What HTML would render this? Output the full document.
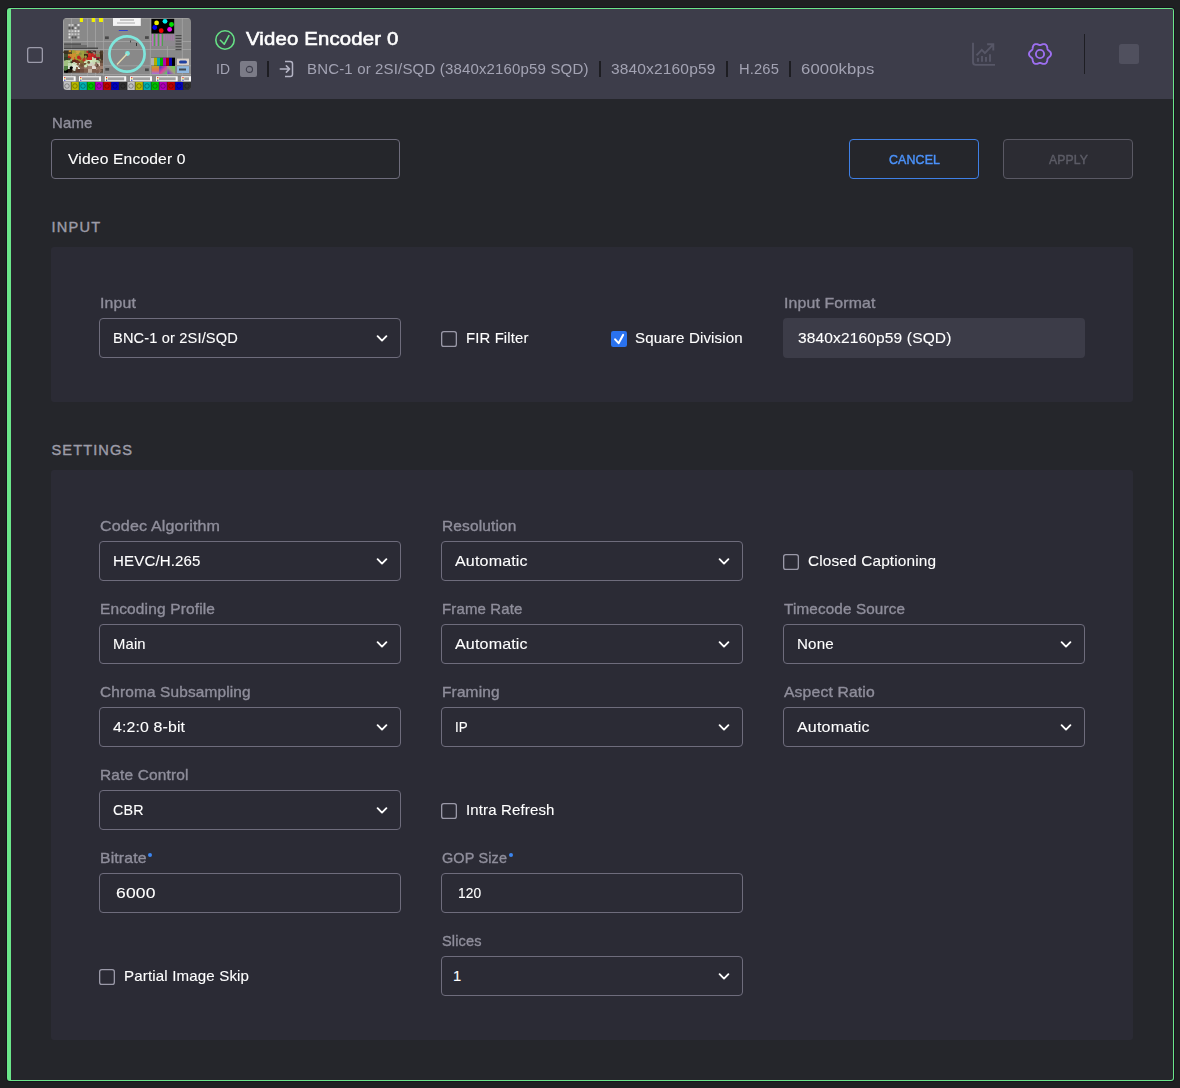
<!DOCTYPE html>
<html><head><meta charset="utf-8"><title>Video Encoder</title>
<style>
html,body{margin:0;padding:0;}
body{width:1180px;height:1088px;background:#1f2022;position:relative;overflow:hidden;font-family:"Liberation Sans",sans-serif;}
#card{position:absolute;left:7px;top:8px;width:1162px;height:1071px;border:1px solid #6be68a;border-left:4px solid #6be68a;border-radius:3px;background:#25262b;box-shadow:0 0 0 1px #17121c;}
#hdr{position:absolute;left:11px;top:9px;width:1162px;height:90px;background:#3d3d4a;border-top-right-radius:2px;}
.t{position:absolute;white-space:nowrap;}
.box{position:absolute;box-sizing:border-box;border:1px solid #6e6c7c;border-radius:4px;}
.panel{position:absolute;background:#2b2b35;border-radius:3px;}
.dot{position:absolute;width:4px;height:4px;border-radius:50%;background:#3b86f0;}
</style></head>
<body>
<div id="card"></div>
<div id="hdr"></div>
<svg width="16" height="16" style="position:absolute;left:27px;top:47px;"><rect x="0.65" y="0.65" width="14.7" height="14.7" rx="2.2" fill="none" stroke="#9c9baa" stroke-width="1.3"/></svg>
<svg width="128" height="72" viewBox="0 0 128 72" style="position:absolute;left:63px;top:18px;">
<defs><clipPath id="rc"><rect width="128" height="72" rx="4"/></clipPath>
<linearGradient id="g1" x1="0" y1="0" x2="0" y2="1"><stop offset="0" stop-color="#c8a020"/><stop offset="0.5" stop-color="#e07050"/><stop offset="1" stop-color="#a070e0"/></linearGradient>
<linearGradient id="g2" x1="0" y1="0" x2="1" y2="1"><stop offset="0" stop-color="#3030c0"/><stop offset="0.5" stop-color="#e040a0"/><stop offset="1" stop-color="#40e060"/></linearGradient>
<linearGradient id="g3" x1="0" y1="1" x2="1" y2="0"><stop offset="0" stop-color="#8020e0"/><stop offset="0.5" stop-color="#a0a080"/><stop offset="1" stop-color="#60e040"/></linearGradient>
</defs><g clip-path="url(#rc)">
<rect width="128" height="72" fill="#898989"/>
<g stroke="#a9a9a9" stroke-width="0.7">
<line x1="0.5" y1="0" x2="0.5" y2="58"/>
<line x1="8.4" y1="0" x2="8.4" y2="58"/>
<line x1="24.4" y1="0" x2="24.4" y2="58"/>
<line x1="32.5" y1="0" x2="32.5" y2="58"/>
<line x1="40.4" y1="0" x2="40.4" y2="58"/>
<line x1="87.3" y1="0" x2="87.3" y2="58"/>
<line x1="104.4" y1="0" x2="104.4" y2="58"/>
<line x1="119.3" y1="0" x2="119.3" y2="58"/>
<line x1="0" y1="0.6" x2="128" y2="0.6"/>
<line x1="0" y1="23.5" x2="128" y2="23.5"/>
<line x1="0" y1="31.5" x2="128" y2="31.5"/>
<line x1="0" y1="47.8" x2="128" y2="47.8"/>
<line x1="0" y1="56.5" x2="128" y2="56.5"/>
</g>
<rect x="16.8" y="0" width="3.1999999999999993" height="4" fill="#f0f000"/>
<rect x="28.7" y="0" width="3.3000000000000007" height="4" fill="#f0f000"/>
<rect x="36" y="0" width="4" height="4" fill="#f0f000"/>
<rect x="5.5" y="6.0" width="2" height="2" fill="#c8c8c8"/>
<rect x="8.5" y="6.0" width="2" height="2" fill="#c8c8c8"/>
<rect x="11.5" y="6.0" width="2" height="2" fill="#707070"/>
<rect x="14.5" y="6.0" width="2" height="2" fill="#e0e0e0"/>
<rect x="5.5" y="9.1" width="2" height="2" fill="#505050"/>
<rect x="8.5" y="9.1" width="2" height="2" fill="#505050"/>
<rect x="11.5" y="9.1" width="2" height="2" fill="#e0e0e0"/>
<rect x="14.5" y="9.1" width="2" height="2" fill="#707070"/>
<rect x="5.5" y="12.2" width="2" height="2" fill="#c8c8c8"/>
<rect x="8.5" y="12.2" width="2" height="2" fill="#c8c8c8"/>
<rect x="11.5" y="12.2" width="2" height="2" fill="#e0e0e0"/>
<rect x="14.5" y="12.2" width="2" height="2" fill="#e0e0e0"/>
<rect x="5.5" y="15.3" width="2" height="2" fill="#e0e0e0"/>
<rect x="8.5" y="15.3" width="2" height="2" fill="#c8c8c8"/>
<rect x="11.5" y="15.3" width="2" height="2" fill="#c8c8c8"/>
<rect x="14.5" y="15.3" width="2" height="2" fill="#c8c8c8"/>
<rect x="5.5" y="18.4" width="2" height="2" fill="#e0e0e0"/>
<rect x="8.5" y="18.4" width="2" height="2" fill="#505050"/>
<rect x="11.5" y="18.4" width="2" height="2" fill="#505050"/>
<rect x="14.5" y="18.4" width="2" height="2" fill="#c8c8c8"/>
<rect x="1" y="25.5" width="17" height="1.2" fill="#404040"/><rect x="1" y="27.5" width="23" height="1" fill="#555"/><rect x="1" y="29.6" width="34" height="1.2" fill="#3a3a3a"/>
<rect x="42" y="18.4" width="3.8" height="2.7" fill="#3a3a3a" opacity="0.8"/>
<rect x="82" y="18.2" width="3.8" height="2.7" fill="#3a3a3a" opacity="0.8"/>
<rect x="42.3" y="50" width="3.8" height="2.7" fill="#3a3a3a" opacity="0.8"/>
<rect x="82" y="50.4" width="3.8" height="2.7" fill="#3a3a3a" opacity="0.8"/>
<rect x="50" y="0" width="27.8" height="7.9" fill="#f4f4f4"/><rect x="57" y="1.5" width="14" height="1" fill="#999"/><rect x="54" y="4.5" width="18" height="1" fill="#aaa"/>
<rect x="55.8" y="12" width="9" height="1" fill="#3040d0"/>
<rect x="88.4" y="0.8" width="22.8" height="14.7" fill="#000"/>
<circle cx="93.6" cy="4.9" r="2.4" fill="#f0f000"/>
<circle cx="102" cy="3.3" r="2.4" fill="#00f0f0"/>
<circle cx="108.5" cy="6.5" r="2.4" fill="#00e000"/>
<circle cx="91.7" cy="9.5" r="2.4" fill="#0000f0"/>
<circle cx="98.2" cy="12.7" r="2.4" fill="#f00000"/>
<circle cx="106.6" cy="11.4" r="2.4" fill="#f000f0"/>
<rect x="88.7" y="16" width="23.3" height="12" fill="#8e8a90"/>
<rect x="89" y="16" width="1" height="12" fill="#c070c0"/>
<rect x="91" y="16" width="1" height="12" fill="#50a050"/>
<rect x="93" y="16" width="1" height="12" fill="#c070c0"/>
<rect x="95" y="16" width="1" height="12" fill="#50a050"/>
<rect x="97" y="16" width="1" height="12" fill="#c070c0"/>
<rect x="99" y="16" width="1" height="12" fill="#50a050"/>
<rect x="101.0" y="16.5" width="1.2" height="6" fill="#b070b0" opacity="0.8"/>
<rect x="103.2" y="16.5" width="1.2" height="6" fill="#b070b0" opacity="0.8"/>
<rect x="105.4" y="16.5" width="1.2" height="6" fill="#b070b0" opacity="0.8"/>
<rect x="107.6" y="16.5" width="1.2" height="6" fill="#b070b0" opacity="0.8"/>
<rect x="109.8" y="16.5" width="1.2" height="6" fill="#b070b0" opacity="0.8"/>
<rect x="112.5" y="17.0" width="6" height="1.2" fill="#3a3a3a" opacity="0.8"/>
<rect x="112.5" y="19.8" width="6" height="1.2" fill="#3a3a3a" opacity="0.8"/>
<rect x="112.5" y="22.6" width="6" height="1.2" fill="#3a3a3a" opacity="0.8"/>
<rect x="112.5" y="25.4" width="6" height="1.2" fill="#3a3a3a" opacity="0.8"/>
<rect x="112.5" y="28.2" width="6" height="1.2" fill="#3a3a3a" opacity="0.8"/>
<rect x="112.5" y="31.0" width="6" height="1.2" fill="#3a3a3a" opacity="0.8"/>
<filter id="bl" x="0" y="0" width="1" height="1"><feGaussianBlur stdDeviation="0.45"/></filter>
<g filter="url(#bl)">
<rect x="1" y="32.5" width="4.05" height="3.55" fill="#3a3020"/>
<rect x="5" y="32.5" width="4.05" height="3.55" fill="#504020"/>
<rect x="9" y="32.5" width="4.05" height="3.55" fill="#c89030"/>
<rect x="13" y="32.5" width="4.05" height="3.55" fill="#d0a040"/>
<rect x="17" y="32.5" width="4.05" height="3.55" fill="#a0a040"/>
<rect x="21" y="32.5" width="4.05" height="3.55" fill="#8a8a40"/>
<rect x="25" y="32.5" width="4.05" height="3.55" fill="#403828"/>
<rect x="29" y="32.5" width="4.05" height="3.55" fill="#503030"/>
<rect x="33" y="32.5" width="4.05" height="3.55" fill="#908070"/>
<rect x="37" y="32.5" width="3.05" height="3.55" fill="#504030"/>
<rect x="1" y="36" width="4.05" height="3.05" fill="#405030"/>
<rect x="5" y="36" width="4.05" height="3.05" fill="#c08030"/>
<rect x="9" y="36" width="4.05" height="3.05" fill="#d09030"/>
<rect x="13" y="36" width="4.05" height="3.05" fill="#a0a030"/>
<rect x="17" y="36" width="4.05" height="3.05" fill="#a0a040"/>
<rect x="21" y="36" width="4.05" height="3.05" fill="#402818"/>
<rect x="25" y="36" width="4.05" height="3.05" fill="#c02020"/>
<rect x="29" y="36" width="4.05" height="3.05" fill="#d03020"/>
<rect x="33" y="36" width="4.05" height="3.05" fill="#808050"/>
<rect x="37" y="36" width="3.05" height="3.05" fill="#403020"/>
<rect x="1" y="39" width="4.05" height="3.05" fill="#304028"/>
<rect x="5" y="39" width="4.05" height="3.05" fill="#b02020"/>
<rect x="9" y="39" width="4.05" height="3.05" fill="#c02020"/>
<rect x="13" y="39" width="4.05" height="3.05" fill="#a09030"/>
<rect x="17" y="39" width="4.05" height="3.05" fill="#a09040"/>
<rect x="21" y="39" width="4.05" height="3.05" fill="#c03020"/>
<rect x="25" y="39" width="4.05" height="3.05" fill="#d02020"/>
<rect x="29" y="39" width="4.05" height="3.05" fill="#c8d8b0"/>
<rect x="33" y="39" width="4.05" height="3.05" fill="#a02030"/>
<rect x="37" y="39" width="3.05" height="3.05" fill="#403028"/>
<rect x="1" y="42" width="4.05" height="3.05" fill="#a0c080"/>
<rect x="5" y="42" width="4.05" height="3.05" fill="#90b070"/>
<rect x="9" y="42" width="4.05" height="3.05" fill="#602818"/>
<rect x="13" y="42" width="4.05" height="3.05" fill="#703020"/>
<rect x="17" y="42" width="4.05" height="3.05" fill="#807030"/>
<rect x="21" y="42" width="4.05" height="3.05" fill="#c8e0b0"/>
<rect x="25" y="42" width="4.05" height="3.05" fill="#d0e8c0"/>
<rect x="29" y="42" width="4.05" height="3.05" fill="#c8e0b0"/>
<rect x="33" y="42" width="4.05" height="3.05" fill="#b0c8a0"/>
<rect x="37" y="42" width="3.05" height="3.05" fill="#604838"/>
<rect x="1" y="45" width="4.05" height="3.05" fill="#a0c080"/>
<rect x="5" y="45" width="4.05" height="3.05" fill="#c0d8b0"/>
<rect x="9" y="45" width="4.05" height="3.05" fill="#d0e0c0"/>
<rect x="13" y="45" width="4.05" height="3.05" fill="#e0e8d0"/>
<rect x="17" y="45" width="4.05" height="3.05" fill="#806040"/>
<rect x="21" y="45" width="4.05" height="3.05" fill="#705030"/>
<rect x="25" y="45" width="4.05" height="3.05" fill="#d0d0c0"/>
<rect x="29" y="45" width="4.05" height="3.05" fill="#d8c8b8"/>
<rect x="33" y="45" width="4.05" height="3.05" fill="#e0d0c0"/>
<rect x="37" y="45" width="3.05" height="3.05" fill="#806050"/>
<rect x="1" y="48" width="4.05" height="3.05" fill="#508040"/>
<rect x="5" y="48" width="4.05" height="3.05" fill="#d8e0d0"/>
<rect x="9" y="48" width="4.05" height="3.05" fill="#e0e8d8"/>
<rect x="13" y="48" width="4.05" height="3.05" fill="#e8f0e0"/>
<rect x="17" y="48" width="4.05" height="3.05" fill="#806050"/>
<rect x="21" y="48" width="4.05" height="3.05" fill="#907060"/>
<rect x="25" y="48" width="4.05" height="3.05" fill="#a08070"/>
<rect x="29" y="48" width="4.05" height="3.05" fill="#e0d8d0"/>
<rect x="33" y="48" width="4.05" height="3.05" fill="#907060"/>
<rect x="37" y="48" width="3.05" height="3.05" fill="#a08070"/>
<rect x="1" y="51" width="4.05" height="3.7500000000000027" fill="#000000"/>
<rect x="5" y="51" width="4.05" height="3.7500000000000027" fill="#201810"/>
<rect x="9" y="51" width="4.05" height="3.7500000000000027" fill="#504030"/>
<rect x="13" y="51" width="4.05" height="3.7500000000000027" fill="#604030"/>
<rect x="17" y="51" width="4.05" height="3.7500000000000027" fill="#705040"/>
<rect x="21" y="51" width="4.05" height="3.7500000000000027" fill="#806050"/>
<rect x="25" y="51" width="4.05" height="3.7500000000000027" fill="#c0b0a0"/>
<rect x="29" y="51" width="4.05" height="3.7500000000000027" fill="#806050"/>
<rect x="33" y="51" width="4.05" height="3.7500000000000027" fill="#a08070"/>
<rect x="37" y="51" width="3.05" height="3.7500000000000027" fill="#605040"/>
<circle cx="29.8" cy="45.4" r="1.6" fill="#d0d0c0"/>
<circle cx="11.2" cy="45.5" r="1.6" fill="#e0e8d0"/>
<circle cx="17.2" cy="48.3" r="1.8" fill="#806050"/>
<circle cx="6.1" cy="40.7" r="1.3" fill="#405030"/>
<circle cx="10.8" cy="47.1" r="1.2" fill="#e0e8d8"/>
<circle cx="32.7" cy="45.1" r="1.2" fill="#806050"/>
<circle cx="9.8" cy="40.1" r="1.8" fill="#d09030"/>
<circle cx="26.5" cy="36.4" r="1.7" fill="#d03020"/>
<circle cx="22.6" cy="48.0" r="1.6" fill="#d0e8c0"/>
<circle cx="22.8" cy="39.0" r="1.7" fill="#402818"/>
<circle cx="38.6" cy="34.9" r="1.7" fill="#504030"/>
<circle cx="1.8" cy="42.0" r="0.8" fill="#304028"/>
<circle cx="24.4" cy="33.9" r="1.1" fill="#c02020"/>
<circle cx="34.5" cy="53.6" r="1.8" fill="#806050"/>
<circle cx="12.8" cy="34.6" r="0.8" fill="#a0a040"/>
<circle cx="8.5" cy="41.6" r="1.0" fill="#90b070"/>
<circle cx="2.6" cy="51.2" r="1.8" fill="#508040"/>
<circle cx="35.1" cy="40.9" r="1.2" fill="#403028"/>
<circle cx="33.9" cy="47.3" r="1.8" fill="#604838"/>
<circle cx="31.8" cy="38.7" r="1.5" fill="#a02030"/>
<circle cx="36.6" cy="42.2" r="1.1" fill="#604838"/>
<circle cx="13.9" cy="49.6" r="0.8" fill="#604030"/>
<circle cx="24.4" cy="46.3" r="1.4" fill="#c8e0b0"/>
<circle cx="18.7" cy="47.3" r="1.5" fill="#705030"/>
<circle cx="29.0" cy="33.5" r="0.8" fill="#908070"/>
<circle cx="15.0" cy="46.2" r="1.4" fill="#806040"/>
<circle cx="7.7" cy="36.9" r="1.1" fill="#d09030"/>
<circle cx="30.9" cy="35.2" r="1.5" fill="#908070"/>
<circle cx="6.0" cy="43.5" r="1.0" fill="#c0d8b0"/>
<circle cx="8.1" cy="42.1" r="0.9" fill="#a0c080"/>
<circle cx="13.2" cy="40.0" r="1.6" fill="#a0a030"/>
<circle cx="37.5" cy="34.7" r="1.0" fill="#403020"/>
<circle cx="22.6" cy="38.7" r="1.3" fill="#a0a040"/>
<circle cx="8.3" cy="49.9" r="1.7" fill="#000000"/>
<circle cx="13.9" cy="50.4" r="1.1" fill="#806040"/>
<circle cx="5.9" cy="39.1" r="1.1" fill="#b02020"/>
<circle cx="16.8" cy="41.8" r="1.7" fill="#a09030"/>
<circle cx="6.9" cy="33.1" r="1.2" fill="#d09030"/>
<circle cx="37.1" cy="52.5" r="1.5" fill="#907060"/>
<circle cx="32.8" cy="46.9" r="1.3" fill="#907060"/>
<circle cx="34.8" cy="51.1" r="0.9" fill="#a08070"/>
<circle cx="10.3" cy="33.7" r="1.7" fill="#a0a030"/>
<circle cx="35.1" cy="51.9" r="0.8" fill="#806050"/>
<circle cx="29.3" cy="36.6" r="1.5" fill="#c02020"/>
<circle cx="20.9" cy="41.7" r="1.1" fill="#807030"/>
<circle cx="10.6" cy="51.1" r="1.2" fill="#d8e0d0"/>
<circle cx="8.5" cy="44.2" r="1.0" fill="#304028"/>
<circle cx="11.4" cy="51.7" r="1.3" fill="#d8e0d0"/>
<circle cx="22.7" cy="41.4" r="1.1" fill="#a09040"/>
<circle cx="21.0" cy="41.9" r="1.6" fill="#c03020"/>
<circle cx="1.1" cy="34.2" r="0.9" fill="#3a3020"/>
<circle cx="3.6" cy="53.5" r="1.3" fill="#000000"/>
<circle cx="19.6" cy="36.3" r="1.2" fill="#a0a040"/>
<circle cx="15.8" cy="39.4" r="1.8" fill="#c02020"/>
<circle cx="17.3" cy="35.7" r="1.5" fill="#8a8a40"/>
<circle cx="31.2" cy="44.9" r="1.3" fill="#c8d8b0"/>
<circle cx="25.7" cy="44.4" r="1.4" fill="#705030"/>
<circle cx="17.4" cy="40.8" r="1.1" fill="#c03020"/>
<circle cx="37.1" cy="41.8" r="1.0" fill="#808050"/>
<circle cx="11.3" cy="45.4" r="1.2" fill="#c0d8b0"/>
</g>
<circle cx="64" cy="36" r="17.6" fill="none" stroke="#7fe6dc" stroke-width="2.7"/>
<circle cx="64.5" cy="35.5" r="2.4" fill="#7fe6dc"/>
<line x1="64" y1="36" x2="54" y2="46.5" stroke="#e8dcb0" stroke-width="1.3"/>
<rect x="67" y="22.5" width="0.8" height="2" fill="#333"/><rect x="73" y="25" width="1" height="3" fill="#333"/>
<rect x="88" y="39.8" width="24" height="7.9" fill="#000"/>
<rect x="88" y="39.8" width="3" height="7.9" fill="#b0b0b0"/>
<rect x="91" y="39.8" width="3" height="7.9" fill="#b0b000"/>
<rect x="94" y="39.8" width="3" height="7.9" fill="#00b0b0"/>
<rect x="97" y="39.8" width="3" height="7.9" fill="#00b000"/>
<rect x="100" y="39.8" width="3" height="7.9" fill="#b000b0"/>
<rect x="103" y="39.8" width="3" height="7.9" fill="#b00000"/>
<rect x="106" y="39.8" width="3" height="7.9" fill="#0000b0"/>
<rect x="109" y="39.8" width="3" height="7.9" fill="#000000"/>
<rect x="88.7" y="48.2" width="7.3" height="7.8" fill="url(#g1)"/><rect x="96.3" y="48.2" width="7.8" height="7.8" fill="url(#g2)"/><rect x="104.4" y="48.2" width="7.6" height="7.8" fill="url(#g3)"/>
<rect x="114" y="40.6" width="12" height="6.5" fill="#d8d0c8"/><rect x="116" y="42.5" width="8" height="3" rx="1.5" fill="#2040a0"/>
<rect x="114" y="48.2" width="12" height="6.8" fill="#90b8e0"/><rect x="116" y="50.5" width="7" height="2" fill="#404850"/>
<rect x="0" y="57.8" width="128" height="6.2" fill="#8a8a8a"/>
<rect x="0" y="58.2" width="12.7" height="5.2" fill="#f8f8f8"/>
<rect x="1.2" y="59" width="1.2" height="1.2" fill="#e02020"/><rect x="1.2" y="60.3" width="1.2" height="1.2" fill="#e0e020"/><rect x="1.2" y="61.6" width="1.2" height="1.2" fill="#2020c0"/>
<rect x="3" y="59.3" width="7.699999999999999" height="3" fill="#555" opacity="0.55"/>
<rect x="16" y="58.2" width="22" height="5.2" fill="#f8f8f8"/>
<rect x="17.2" y="59" width="1.2" height="1.2" fill="#e02020"/><rect x="17.2" y="60.3" width="1.2" height="1.2" fill="#e0e020"/><rect x="17.2" y="61.6" width="1.2" height="1.2" fill="#2020c0"/>
<rect x="19" y="59.3" width="17" height="3" fill="#555" opacity="0.55"/>
<rect x="41.8" y="58.2" width="21.400000000000006" height="5.2" fill="#f8f8f8"/>
<rect x="43.0" y="59" width="1.2" height="1.2" fill="#e02020"/><rect x="43.0" y="60.3" width="1.2" height="1.2" fill="#e0e020"/><rect x="43.0" y="61.6" width="1.2" height="1.2" fill="#2020c0"/>
<rect x="44.8" y="59.3" width="16.400000000000006" height="3" fill="#555" opacity="0.55"/>
<rect x="67" y="58.2" width="22" height="5.2" fill="#f8f8f8"/>
<rect x="68.2" y="59" width="1.2" height="1.2" fill="#e02020"/><rect x="68.2" y="60.3" width="1.2" height="1.2" fill="#e0e020"/><rect x="68.2" y="61.6" width="1.2" height="1.2" fill="#2020c0"/>
<rect x="70" y="59.3" width="17" height="3" fill="#555" opacity="0.55"/>
<rect x="93" y="58.2" width="21.700000000000003" height="5.2" fill="#f8f8f8"/>
<rect x="94.2" y="59" width="1.2" height="1.2" fill="#e02020"/><rect x="94.2" y="60.3" width="1.2" height="1.2" fill="#e0e020"/><rect x="94.2" y="61.6" width="1.2" height="1.2" fill="#2020c0"/>
<rect x="96" y="59.3" width="16.700000000000003" height="3" fill="#555" opacity="0.55"/>
<rect x="118.2" y="58.2" width="9.799999999999997" height="5.2" fill="#f8f8f8"/>
<rect x="119.4" y="59" width="1.2" height="1.2" fill="#e02020"/><rect x="119.4" y="60.3" width="1.2" height="1.2" fill="#e0e020"/><rect x="119.4" y="61.6" width="1.2" height="1.2" fill="#2020c0"/>
<rect x="121.2" y="59.3" width="4.799999999999997" height="3" fill="#555" opacity="0.55"/>
<rect x="0" y="63.9" width="128" height="8.1" fill="#222"/>
<rect x="0.4" y="64" width="7.4" height="8" fill="#c0c0c0"/>
<circle cx="4" cy="68" r="2.3" fill="none" stroke="#000" stroke-width="0.6" opacity="0.5"/>
<rect x="8.4" y="64" width="7.4" height="8" fill="#b8b800"/>
<circle cx="12" cy="68" r="2.3" fill="none" stroke="#000" stroke-width="0.6" opacity="0.5"/>
<rect x="16.4" y="64" width="7.4" height="8" fill="#00b0b0"/>
<circle cx="20" cy="68" r="2.3" fill="none" stroke="#000" stroke-width="0.6" opacity="0.5"/>
<rect x="24.4" y="64" width="7.4" height="8" fill="#00c000"/>
<circle cx="28" cy="68" r="2.3" fill="none" stroke="#000" stroke-width="0.6" opacity="0.5"/>
<rect x="32.4" y="64" width="7.4" height="8" fill="#b000b8"/>
<circle cx="36" cy="68" r="2.3" fill="none" stroke="#000" stroke-width="0.6" opacity="0.5"/>
<rect x="40.4" y="64" width="7.4" height="8" fill="#c00000"/>
<circle cx="44" cy="68" r="2.3" fill="none" stroke="#000" stroke-width="0.6" opacity="0.5"/>
<rect x="48.4" y="64" width="7.4" height="8" fill="#0000c0"/>
<circle cx="52" cy="68" r="2.3" fill="none" stroke="#000" stroke-width="0.6" opacity="0.5"/>
<rect x="56.4" y="64" width="7.4" height="8" fill="#303030"/>
<circle cx="60" cy="68" r="2.3" fill="none" stroke="#000" stroke-width="0.6" opacity="0.5"/>
<rect x="64.4" y="64" width="7.4" height="8" fill="#c0c0c0"/>
<circle cx="68" cy="68" r="2.3" fill="none" stroke="#000" stroke-width="0.6" opacity="0.5"/>
<rect x="72.4" y="64" width="7.4" height="8" fill="#b8b800"/>
<circle cx="76" cy="68" r="2.3" fill="none" stroke="#000" stroke-width="0.6" opacity="0.5"/>
<rect x="80.4" y="64" width="7.4" height="8" fill="#00b0b0"/>
<circle cx="84" cy="68" r="2.3" fill="none" stroke="#000" stroke-width="0.6" opacity="0.5"/>
<rect x="88.4" y="64" width="7.4" height="8" fill="#00c000"/>
<circle cx="92" cy="68" r="2.3" fill="none" stroke="#000" stroke-width="0.6" opacity="0.5"/>
<rect x="96.4" y="64" width="7.4" height="8" fill="#b000b8"/>
<circle cx="100" cy="68" r="2.3" fill="none" stroke="#000" stroke-width="0.6" opacity="0.5"/>
<rect x="104.4" y="64" width="7.4" height="8" fill="#c00000"/>
<circle cx="108" cy="68" r="2.3" fill="none" stroke="#000" stroke-width="0.6" opacity="0.5"/>
<rect x="112.4" y="64" width="7.4" height="8" fill="#0000c0"/>
<circle cx="116" cy="68" r="2.3" fill="none" stroke="#000" stroke-width="0.6" opacity="0.5"/>
<rect x="120.4" y="64" width="7.4" height="8" fill="#303030"/>
<circle cx="124" cy="68" r="2.3" fill="none" stroke="#000" stroke-width="0.6" opacity="0.5"/>
</g></svg>
<svg width="24" height="24" viewBox="0 0 24 24" style="position:absolute;left:213px;top:28px;">
<circle cx="12" cy="12" r="9.2" fill="none" stroke="#66e085" stroke-width="1.6"/>
<path d="M7.4 12.3 L11.3 16.2 L15.9 7.6" fill="none" stroke="#66e085" stroke-width="1.6" stroke-linecap="round" stroke-linejoin="round"/>
</svg>
<div class="t" style="left:245.70px;top:28.72px;font-size:19px;line-height:19px;color:#ffffff;font-weight:400;letter-spacing:0.140px;transform:scaleX(1.0712);transform-origin:0 0;-webkit-text-stroke:0.6px #ffffff;">Video Encoder 0</div>
<div class="t" style="left:215.70px;top:61.73px;font-size:14.5px;line-height:14.5px;color:#a3a3b3;font-weight:400;letter-spacing:0.157px;transform:scaleX(0.9552);transform-origin:0 0;">ID</div>
<div style="position:absolute;left:240px;top:61px;width:17px;height:16px;border-radius:2px;background:#7b7b87;"></div>
<svg width="17" height="16" style="position:absolute;left:240px;top:61px;"><ellipse cx="9.4" cy="8.4" rx="3.1" ry="3.0" fill="none" stroke="#3e3e4c" stroke-width="1.1"/></svg>
<div style="position:absolute;left:267px;top:61px;width:2px;height:16px;background:#1d1d22;"></div>
<div style="position:absolute;left:598.5px;top:61px;width:2px;height:16px;background:#1d1d22;"></div>
<div style="position:absolute;left:726px;top:61px;width:2px;height:16px;background:#1d1d22;"></div>
<div style="position:absolute;left:789px;top:61px;width:2px;height:16px;background:#1d1d22;"></div>
<svg width="18" height="18" viewBox="0 0 18 18" style="position:absolute;left:278px;top:60px;">
<path d="M7 1.5 H12.2 Q14.5 1.5 14.5 3.8 V14.2 Q14.5 16.5 12.2 16.5 H7" fill="none" stroke="#b4b4c4" stroke-width="1.5"/>
<path d="M2.3 9 H11.6 M8.4 5.9 L11.6 9 L8.4 12.1" fill="none" stroke="#b4b4c4" stroke-width="1.6" stroke-linejoin="round" stroke-linecap="round"/>
</svg>
<div class="t" style="left:306.50px;top:61.57px;font-size:14.8px;line-height:14.8px;color:#a3a3b3;font-weight:400;letter-spacing:0.148px;transform:scaleX(1.0150);transform-origin:0 0;">BNC-1 or 2SI/SQD (3840x2160p59 SQD)</div>
<div class="t" style="left:611.20px;top:61.57px;font-size:14.8px;line-height:14.8px;color:#a3a3b3;font-weight:400;letter-spacing:0.143px;transform:scaleX(1.0487);transform-origin:0 0;">3840x2160p59</div>
<div class="t" style="left:738.60px;top:61.57px;font-size:14.8px;line-height:14.8px;color:#a3a3b3;font-weight:400;letter-spacing:0.151px;transform:scaleX(0.9945);transform-origin:0 0;">H.265</div>
<div class="t" style="left:801.00px;top:61.57px;font-size:14.8px;line-height:14.8px;color:#a3a3b3;font-weight:400;letter-spacing:0.133px;transform:scaleX(1.1246);transform-origin:0 0;">6000kbps</div>
<svg width="28" height="28" viewBox="0 0 28 28" style="position:absolute;left:970px;top:41px;">
<path d="M3 1.8 V21 Q3 23.9 5.9 23.9 H25" fill="none" stroke="#575767" stroke-width="1.9"/>
<path d="M6.5 14.4 L11.8 8.9 L14.9 12.2 L22.8 3.8 M17.1 3.3 H23.3 V9.6" fill="none" stroke="#575767" stroke-width="1.9"/>
<path d="M8 17 V20.8 M12 15.1 V20.8 M16 16 V20.8 M20 13.2 V20.8" fill="none" stroke="#575767" stroke-width="1.9"/>
</svg>
<svg width="28" height="28" viewBox="0 0 28 28" style="position:absolute;left:1026px;top:40px;">
<path fill="none" stroke="#9d6ff0" stroke-width="1.9" stroke-linejoin="round" d="M25.00 14.00 L24.99 14.19 L24.97 14.38 L24.94 14.57 L24.90 14.76 L24.84 14.95 L24.77 15.13 L24.69 15.31 L24.60 15.49 L24.50 15.66 L24.38 15.83 L24.27 16.00 L24.14 16.15 L24.00 16.31 L23.87 16.46 L23.72 16.61 L23.57 16.75 L23.43 16.88 L23.27 17.01 L23.12 17.14 L22.97 17.27 L22.82 17.39 L22.67 17.50 L22.53 17.62 L22.39 17.74 L22.26 17.85 L22.13 17.97 L22.01 18.08 L21.90 18.20 L21.80 18.32 L21.71 18.45 L21.64 18.59 L21.59 18.74 L21.54 18.90 L21.50 19.06 L21.46 19.23 L21.43 19.40 L21.40 19.58 L21.37 19.76 L21.34 19.95 L21.31 20.14 L21.28 20.33 L21.25 20.52 L21.21 20.72 L21.17 20.92 L21.12 21.12 L21.06 21.31 L21.00 21.51 L20.94 21.70 L20.86 21.89 L20.78 22.08 L20.69 22.26 L20.59 22.43 L20.48 22.60 L20.36 22.76 L20.24 22.91 L20.11 23.06 L19.97 23.19 L19.82 23.31 L19.66 23.42 L19.50 23.53 L19.33 23.62 L19.16 23.70 L18.97 23.76 L18.79 23.82 L18.60 23.86 L18.40 23.89 L18.21 23.91 L18.01 23.92 L17.81 23.92 L17.61 23.91 L17.40 23.89 L17.20 23.86 L17.00 23.82 L16.80 23.77 L16.61 23.72 L16.41 23.66 L16.22 23.60 L16.03 23.54 L15.84 23.47 L15.66 23.40 L15.48 23.33 L15.30 23.26 L15.13 23.20 L14.96 23.13 L14.79 23.08 L14.63 23.02 L14.47 22.98 L14.31 22.94 L14.16 22.91 L14.00 22.90 L13.84 22.91 L13.69 22.94 L13.53 22.98 L13.37 23.02 L13.21 23.08 L13.04 23.13 L12.87 23.20 L12.70 23.26 L12.52 23.33 L12.34 23.40 L12.16 23.47 L11.97 23.54 L11.78 23.60 L11.59 23.66 L11.39 23.72 L11.20 23.77 L11.00 23.82 L10.80 23.86 L10.60 23.89 L10.39 23.91 L10.19 23.92 L9.99 23.92 L9.79 23.91 L9.60 23.89 L9.40 23.86 L9.21 23.82 L9.03 23.76 L8.84 23.70 L8.67 23.62 L8.50 23.53 L8.34 23.42 L8.18 23.31 L8.03 23.19 L7.89 23.06 L7.76 22.91 L7.64 22.76 L7.52 22.60 L7.41 22.43 L7.31 22.26 L7.22 22.08 L7.14 21.89 L7.06 21.70 L7.00 21.51 L6.94 21.31 L6.88 21.12 L6.83 20.92 L6.79 20.72 L6.75 20.52 L6.72 20.33 L6.69 20.14 L6.66 19.95 L6.63 19.76 L6.60 19.58 L6.57 19.40 L6.54 19.23 L6.50 19.06 L6.46 18.90 L6.41 18.74 L6.36 18.59 L6.29 18.45 L6.20 18.32 L6.10 18.20 L5.99 18.08 L5.87 17.97 L5.74 17.85 L5.61 17.74 L5.47 17.62 L5.33 17.50 L5.18 17.39 L5.03 17.27 L4.88 17.14 L4.73 17.01 L4.57 16.88 L4.43 16.75 L4.28 16.61 L4.13 16.46 L4.00 16.31 L3.86 16.15 L3.73 16.00 L3.62 15.83 L3.50 15.66 L3.40 15.49 L3.31 15.31 L3.23 15.13 L3.16 14.95 L3.10 14.76 L3.06 14.57 L3.03 14.38 L3.01 14.19 L3.00 14.00 L3.01 13.81 L3.03 13.62 L3.06 13.43 L3.10 13.24 L3.16 13.05 L3.23 12.87 L3.31 12.69 L3.40 12.51 L3.50 12.34 L3.62 12.17 L3.73 12.00 L3.86 11.85 L4.00 11.69 L4.13 11.54 L4.28 11.39 L4.43 11.25 L4.57 11.12 L4.73 10.99 L4.88 10.86 L5.03 10.73 L5.18 10.61 L5.33 10.50 L5.47 10.38 L5.61 10.26 L5.74 10.15 L5.87 10.03 L5.99 9.92 L6.10 9.80 L6.20 9.68 L6.29 9.55 L6.36 9.41 L6.41 9.26 L6.46 9.10 L6.50 8.94 L6.54 8.77 L6.57 8.60 L6.60 8.42 L6.63 8.24 L6.66 8.05 L6.69 7.86 L6.72 7.67 L6.75 7.48 L6.79 7.28 L6.83 7.08 L6.88 6.88 L6.94 6.69 L7.00 6.49 L7.06 6.30 L7.14 6.11 L7.22 5.92 L7.31 5.74 L7.41 5.57 L7.52 5.40 L7.64 5.24 L7.76 5.09 L7.89 4.94 L8.03 4.81 L8.18 4.69 L8.34 4.58 L8.50 4.47 L8.67 4.38 L8.84 4.30 L9.03 4.24 L9.21 4.18 L9.40 4.14 L9.60 4.11 L9.79 4.09 L9.99 4.08 L10.19 4.08 L10.39 4.09 L10.60 4.11 L10.80 4.14 L11.00 4.18 L11.20 4.23 L11.39 4.28 L11.59 4.34 L11.78 4.40 L11.97 4.46 L12.16 4.53 L12.34 4.60 L12.52 4.67 L12.70 4.74 L12.87 4.80 L13.04 4.87 L13.21 4.92 L13.37 4.98 L13.53 5.02 L13.69 5.06 L13.84 5.09 L14.00 5.10 L14.16 5.09 L14.31 5.06 L14.47 5.02 L14.63 4.98 L14.79 4.92 L14.96 4.87 L15.13 4.80 L15.30 4.74 L15.48 4.67 L15.66 4.60 L15.84 4.53 L16.03 4.46 L16.22 4.40 L16.41 4.34 L16.61 4.28 L16.80 4.23 L17.00 4.18 L17.20 4.14 L17.40 4.11 L17.61 4.09 L17.81 4.08 L18.01 4.08 L18.21 4.09 L18.40 4.11 L18.60 4.14 L18.79 4.18 L18.97 4.24 L19.16 4.30 L19.33 4.38 L19.50 4.47 L19.66 4.58 L19.82 4.69 L19.97 4.81 L20.11 4.94 L20.24 5.09 L20.36 5.24 L20.48 5.40 L20.59 5.57 L20.69 5.74 L20.78 5.92 L20.86 6.11 L20.94 6.30 L21.00 6.49 L21.06 6.69 L21.12 6.88 L21.17 7.08 L21.21 7.28 L21.25 7.48 L21.28 7.67 L21.31 7.86 L21.34 8.05 L21.37 8.24 L21.40 8.42 L21.43 8.60 L21.46 8.77 L21.50 8.94 L21.54 9.10 L21.59 9.26 L21.64 9.41 L21.71 9.55 L21.80 9.68 L21.90 9.80 L22.01 9.92 L22.13 10.03 L22.26 10.15 L22.39 10.26 L22.53 10.38 L22.67 10.50 L22.82 10.61 L22.97 10.73 L23.12 10.86 L23.27 10.99 L23.43 11.12 L23.57 11.25 L23.72 11.39 L23.87 11.54 L24.00 11.69 L24.14 11.85 L24.27 12.00 L24.38 12.17 L24.50 12.34 L24.60 12.51 L24.69 12.69 L24.77 12.87 L24.84 13.05 L24.90 13.24 L24.94 13.43 L24.97 13.62 L24.99 13.81Z"/>
<circle cx="14" cy="14" r="4.1" fill="none" stroke="#9d6ff0" stroke-width="1.9"/>
</svg>
<div style="position:absolute;left:1084px;top:34px;width:1px;height:40px;background:#1e1e23;"></div>
<div style="position:absolute;left:1119px;top:44px;width:20px;height:20px;border-radius:2.5px;background:#50505e;"></div>
<div class="t" style="left:51.80px;top:116.44px;font-size:14.6px;line-height:14.6px;color:#8f8e9b;font-weight:400;letter-spacing:0.146px;transform:scaleX(1.0248);transform-origin:0 0;-webkit-text-stroke:0.35px #8f8e9b;">Name</div>
<div class="box" style="left:51px;top:139px;width:349px;height:40px;"></div>
<div class="t" style="left:68.30px;top:152.47px;font-size:14.8px;line-height:14.8px;color:#ffffff;font-weight:400;letter-spacing:0.142px;transform:scaleX(1.0573);transform-origin:0 0;-webkit-text-stroke:0.1px #ffffff;">Video Encoder 0</div>
<div class="box" style="left:849px;top:139px;width:130px;height:40px;border-color:#3f80e6;"></div>
<div class="t" style="left:888.50px;top:153.20px;font-size:13px;line-height:13px;color:#4b92fa;font-weight:400;letter-spacing:0.157px;transform:scaleX(0.9532);transform-origin:0 0;-webkit-text-stroke:0.45px #4b92fa;">CANCEL</div>
<div class="box" style="left:1003px;top:139px;width:130px;height:40px;border-color:#5a5964;background:#2c2c33;"></div>
<div class="t" style="left:1048.70px;top:153.20px;font-size:13px;line-height:13px;color:#5c5c66;font-weight:400;letter-spacing:0.160px;transform:scaleX(0.9377);transform-origin:0 0;-webkit-text-stroke:0.45px #5c5c66;">APPLY</div>
<div class="t" style="left:51.60px;top:220.04px;font-size:14.6px;line-height:14.6px;color:#9d9ca8;font-weight:400;letter-spacing:1.200px;-webkit-text-stroke:0.4px #9d9ca8;">INPUT</div>
<div class="panel" style="left:51px;top:247px;width:1082px;height:155px;"></div>
<div class="t" style="left:100.10px;top:295.74px;font-size:14.6px;line-height:14.6px;color:#8f8e9b;font-weight:400;letter-spacing:0.138px;transform:scaleX(1.0836);transform-origin:0 0;-webkit-text-stroke:0.35px #8f8e9b;">Input</div>
<div class="box" style="left:99px;top:318px;width:302px;height:40px;"></div>
<div class="t" style="left:112.60px;top:330.97px;font-size:14.8px;line-height:14.8px;color:#ffffff;font-weight:400;letter-spacing:0.152px;transform:scaleX(0.9869);transform-origin:0 0;-webkit-text-stroke:0.1px #ffffff;">BNC-1 or 2SI/SQD</div>
<svg width="14" height="10" viewBox="0 0 14 10" style="position:absolute;left:375px;top:333.5px;"><path d="M2.6 2.2 L7 6.6 L11.4 2.2" fill="none" stroke="#ffffff" stroke-width="1.9" stroke-linecap="round" stroke-linejoin="round"/></svg>
<svg width="16" height="16" style="position:absolute;left:441px;top:331px;"><rect x="0.65" y="0.65" width="14.7" height="14.7" rx="2.2" fill="none" stroke="#9a99a8" stroke-width="1.3"/></svg>
<div class="t" style="left:466.00px;top:331.07px;font-size:14.8px;line-height:14.8px;color:#ffffff;font-weight:400;letter-spacing:0.149px;transform:scaleX(1.0036);transform-origin:0 0;-webkit-text-stroke:0.1px #ffffff;">FIR Filter</div>
<svg width="16" height="16" viewBox="0 0 16 16" style="position:absolute;left:611px;top:331px;"><rect width="16" height="16" rx="2.2" fill="#2a72ee"/><path d="M4.1 8.3 L7.6 12.2 L12.1 3.9" fill="none" stroke="#fff" stroke-width="2" stroke-linecap="round" stroke-linejoin="round"/></svg>
<div class="t" style="left:635.00px;top:331.07px;font-size:14.8px;line-height:14.8px;color:#ffffff;font-weight:400;letter-spacing:0.147px;transform:scaleX(1.0195);transform-origin:0 0;-webkit-text-stroke:0.1px #ffffff;">Square Division</div>
<div class="t" style="left:783.60px;top:295.74px;font-size:14.6px;line-height:14.6px;color:#8f8e9b;font-weight:400;letter-spacing:0.138px;transform:scaleX(1.0854);transform-origin:0 0;-webkit-text-stroke:0.35px #8f8e9b;">Input Format</div>
<div style="position:absolute;left:783px;top:318px;width:302px;height:40px;border-radius:4px;background:#3c3c48;"></div>
<div class="t" style="left:798.30px;top:331.27px;font-size:14.8px;line-height:14.8px;color:#ffffff;font-weight:400;letter-spacing:0.143px;transform:scaleX(1.0475);transform-origin:0 0;-webkit-text-stroke:0.1px #ffffff;">3840x2160p59 (SQD)</div>
<div class="t" style="left:51.50px;top:443.04px;font-size:14.6px;line-height:14.6px;color:#9d9ca8;font-weight:400;letter-spacing:1.086px;-webkit-text-stroke:0.4px #9d9ca8;">SETTINGS</div>
<div class="panel" style="left:51px;top:470px;width:1082px;height:570px;"></div>
<div class="t" style="left:99.60px;top:518.54px;font-size:14.6px;line-height:14.6px;color:#8f8e9b;font-weight:400;letter-spacing:0.136px;transform:scaleX(1.1009);transform-origin:0 0;-webkit-text-stroke:0.35px #8f8e9b;">Codec Algorithm</div>
<div class="box" style="left:99px;top:541px;width:302px;height:40px;"></div>
<div class="t" style="left:112.60px;top:553.97px;font-size:14.8px;line-height:14.8px;color:#ffffff;font-weight:400;letter-spacing:0.148px;transform:scaleX(1.0168);transform-origin:0 0;-webkit-text-stroke:0.1px #ffffff;">HEVC/H.265</div>
<svg width="14" height="10" viewBox="0 0 14 10" style="position:absolute;left:375px;top:556.5px;"><path d="M2.6 2.2 L7 6.6 L11.4 2.2" fill="none" stroke="#ffffff" stroke-width="1.9" stroke-linecap="round" stroke-linejoin="round"/></svg>
<div class="t" style="left:441.60px;top:518.54px;font-size:14.6px;line-height:14.6px;color:#8f8e9b;font-weight:400;letter-spacing:0.142px;transform:scaleX(1.0589);transform-origin:0 0;-webkit-text-stroke:0.35px #8f8e9b;">Resolution</div>
<div class="box" style="left:441px;top:541px;width:302px;height:40px;"></div>
<div class="t" style="left:454.60px;top:553.97px;font-size:14.8px;line-height:14.8px;color:#ffffff;font-weight:400;letter-spacing:0.138px;transform:scaleX(1.0853);transform-origin:0 0;-webkit-text-stroke:0.1px #ffffff;">Automatic</div>
<svg width="14" height="10" viewBox="0 0 14 10" style="position:absolute;left:717px;top:556.5px;"><path d="M2.6 2.2 L7 6.6 L11.4 2.2" fill="none" stroke="#ffffff" stroke-width="1.9" stroke-linecap="round" stroke-linejoin="round"/></svg>
<svg width="16" height="16" style="position:absolute;left:783px;top:554px;"><rect x="0.65" y="0.65" width="14.7" height="14.7" rx="2.2" fill="none" stroke="#9a99a8" stroke-width="1.3"/></svg>
<div class="t" style="left:807.80px;top:554.07px;font-size:14.8px;line-height:14.8px;color:#ffffff;font-weight:400;letter-spacing:0.144px;transform:scaleX(1.0396);transform-origin:0 0;-webkit-text-stroke:0.1px #ffffff;">Closed Captioning</div>
<div class="t" style="left:99.60px;top:601.54px;font-size:14.6px;line-height:14.6px;color:#8f8e9b;font-weight:400;letter-spacing:0.142px;transform:scaleX(1.0601);transform-origin:0 0;-webkit-text-stroke:0.35px #8f8e9b;">Encoding Profile</div>
<div class="box" style="left:99px;top:624px;width:302px;height:40px;"></div>
<div class="t" style="left:112.60px;top:636.97px;font-size:14.8px;line-height:14.8px;color:#ffffff;font-weight:400;letter-spacing:0.150px;transform:scaleX(1.0011);transform-origin:0 0;-webkit-text-stroke:0.1px #ffffff;">Main</div>
<svg width="14" height="10" viewBox="0 0 14 10" style="position:absolute;left:375px;top:639.5px;"><path d="M2.6 2.2 L7 6.6 L11.4 2.2" fill="none" stroke="#ffffff" stroke-width="1.9" stroke-linecap="round" stroke-linejoin="round"/></svg>
<div class="t" style="left:441.60px;top:601.54px;font-size:14.6px;line-height:14.6px;color:#8f8e9b;font-weight:400;letter-spacing:0.146px;transform:scaleX(1.0267);transform-origin:0 0;-webkit-text-stroke:0.35px #8f8e9b;">Frame Rate</div>
<div class="box" style="left:441px;top:624px;width:302px;height:40px;"></div>
<div class="t" style="left:454.60px;top:636.97px;font-size:14.8px;line-height:14.8px;color:#ffffff;font-weight:400;letter-spacing:0.138px;transform:scaleX(1.0853);transform-origin:0 0;-webkit-text-stroke:0.1px #ffffff;">Automatic</div>
<svg width="14" height="10" viewBox="0 0 14 10" style="position:absolute;left:717px;top:639.5px;"><path d="M2.6 2.2 L7 6.6 L11.4 2.2" fill="none" stroke="#ffffff" stroke-width="1.9" stroke-linecap="round" stroke-linejoin="round"/></svg>
<div class="t" style="left:783.60px;top:601.54px;font-size:14.6px;line-height:14.6px;color:#8f8e9b;font-weight:400;letter-spacing:0.144px;transform:scaleX(1.0441);transform-origin:0 0;-webkit-text-stroke:0.35px #8f8e9b;">Timecode Source</div>
<div class="box" style="left:783px;top:624px;width:302px;height:40px;"></div>
<div class="t" style="left:796.60px;top:636.97px;font-size:14.8px;line-height:14.8px;color:#ffffff;font-weight:400;letter-spacing:0.147px;transform:scaleX(1.0220);transform-origin:0 0;-webkit-text-stroke:0.1px #ffffff;">None</div>
<svg width="14" height="10" viewBox="0 0 14 10" style="position:absolute;left:1059px;top:639.5px;"><path d="M2.6 2.2 L7 6.6 L11.4 2.2" fill="none" stroke="#ffffff" stroke-width="1.9" stroke-linecap="round" stroke-linejoin="round"/></svg>
<div class="t" style="left:99.60px;top:684.54px;font-size:14.6px;line-height:14.6px;color:#8f8e9b;font-weight:400;letter-spacing:0.142px;transform:scaleX(1.0554);transform-origin:0 0;-webkit-text-stroke:0.35px #8f8e9b;">Chroma Subsampling</div>
<div class="box" style="left:99px;top:707px;width:302px;height:40px;"></div>
<div class="t" style="left:112.60px;top:719.97px;font-size:14.8px;line-height:14.8px;color:#ffffff;font-weight:400;letter-spacing:0.140px;transform:scaleX(1.0717);transform-origin:0 0;-webkit-text-stroke:0.1px #ffffff;">4:2:0 8-bit</div>
<svg width="14" height="10" viewBox="0 0 14 10" style="position:absolute;left:375px;top:722.5px;"><path d="M2.6 2.2 L7 6.6 L11.4 2.2" fill="none" stroke="#ffffff" stroke-width="1.9" stroke-linecap="round" stroke-linejoin="round"/></svg>
<div class="t" style="left:441.60px;top:684.54px;font-size:14.6px;line-height:14.6px;color:#8f8e9b;font-weight:400;letter-spacing:0.142px;transform:scaleX(1.0582);transform-origin:0 0;-webkit-text-stroke:0.35px #8f8e9b;">Framing</div>
<div class="box" style="left:441px;top:707px;width:302px;height:40px;"></div>
<div class="t" style="left:454.60px;top:719.97px;font-size:14.8px;line-height:14.8px;color:#ffffff;font-weight:400;letter-spacing:0.166px;transform:scaleX(0.9045);transform-origin:0 0;-webkit-text-stroke:0.1px #ffffff;">IP</div>
<svg width="14" height="10" viewBox="0 0 14 10" style="position:absolute;left:717px;top:722.5px;"><path d="M2.6 2.2 L7 6.6 L11.4 2.2" fill="none" stroke="#ffffff" stroke-width="1.9" stroke-linecap="round" stroke-linejoin="round"/></svg>
<div class="t" style="left:783.60px;top:684.54px;font-size:14.6px;line-height:14.6px;color:#8f8e9b;font-weight:400;letter-spacing:0.139px;transform:scaleX(1.0757);transform-origin:0 0;-webkit-text-stroke:0.35px #8f8e9b;">Aspect Ratio</div>
<div class="box" style="left:783px;top:707px;width:302px;height:40px;"></div>
<div class="t" style="left:796.60px;top:719.97px;font-size:14.8px;line-height:14.8px;color:#ffffff;font-weight:400;letter-spacing:0.138px;transform:scaleX(1.0853);transform-origin:0 0;-webkit-text-stroke:0.1px #ffffff;">Automatic</div>
<svg width="14" height="10" viewBox="0 0 14 10" style="position:absolute;left:1059px;top:722.5px;"><path d="M2.6 2.2 L7 6.6 L11.4 2.2" fill="none" stroke="#ffffff" stroke-width="1.9" stroke-linecap="round" stroke-linejoin="round"/></svg>
<div class="t" style="left:99.60px;top:767.54px;font-size:14.6px;line-height:14.6px;color:#8f8e9b;font-weight:400;letter-spacing:0.142px;transform:scaleX(1.0594);transform-origin:0 0;-webkit-text-stroke:0.35px #8f8e9b;">Rate Control</div>
<div class="box" style="left:99px;top:790px;width:302px;height:40px;"></div>
<div class="t" style="left:112.60px;top:802.97px;font-size:14.8px;line-height:14.8px;color:#ffffff;font-weight:400;letter-spacing:0.155px;transform:scaleX(0.9671);transform-origin:0 0;-webkit-text-stroke:0.1px #ffffff;">CBR</div>
<svg width="14" height="10" viewBox="0 0 14 10" style="position:absolute;left:375px;top:805.5px;"><path d="M2.6 2.2 L7 6.6 L11.4 2.2" fill="none" stroke="#ffffff" stroke-width="1.9" stroke-linecap="round" stroke-linejoin="round"/></svg>
<svg width="16" height="16" style="position:absolute;left:441px;top:803px;"><rect x="0.65" y="0.65" width="14.7" height="14.7" rx="2.2" fill="none" stroke="#9a99a8" stroke-width="1.3"/></svg>
<div class="t" style="left:465.50px;top:803.07px;font-size:14.8px;line-height:14.8px;color:#ffffff;font-weight:400;letter-spacing:0.148px;transform:scaleX(1.0123);transform-origin:0 0;-webkit-text-stroke:0.1px #ffffff;">Intra Refresh</div>
<div class="t" style="left:99.60px;top:850.54px;font-size:14.6px;line-height:14.6px;color:#8f8e9b;font-weight:400;letter-spacing:0.139px;transform:scaleX(1.0807);transform-origin:0 0;-webkit-text-stroke:0.35px #8f8e9b;">Bitrate</div>
<div class="box" style="left:99px;top:873px;width:302px;height:40px;"></div>
<div class="t" style="left:116.40px;top:885.77px;font-size:14.8px;line-height:14.8px;color:#ffffff;font-weight:400;letter-spacing:0.127px;transform:scaleX(1.1828);transform-origin:0 0;-webkit-text-stroke:0.1px #ffffff;">6000</div>
<div class="dot" style="left:148px;top:853px;"></div>
<div class="t" style="left:441.60px;top:850.54px;font-size:14.6px;line-height:14.6px;color:#8f8e9b;font-weight:400;letter-spacing:0.152px;transform:scaleX(0.9887);transform-origin:0 0;-webkit-text-stroke:0.35px #8f8e9b;">GOP Size</div>
<div class="box" style="left:441px;top:873px;width:302px;height:40px;"></div>
<div class="t" style="left:458.40px;top:885.77px;font-size:14.8px;line-height:14.8px;color:#ffffff;font-weight:400;letter-spacing:0.161px;transform:scaleX(0.9306);transform-origin:0 0;-webkit-text-stroke:0.1px #ffffff;">120</div>
<div class="dot" style="left:509px;top:853px;"></div>
<div class="t" style="left:441.60px;top:933.54px;font-size:14.6px;line-height:14.6px;color:#8f8e9b;font-weight:400;letter-spacing:0.151px;transform:scaleX(0.9966);transform-origin:0 0;-webkit-text-stroke:0.35px #8f8e9b;">Slices</div>
<div class="box" style="left:441px;top:956px;width:302px;height:40px;"></div>
<div class="t" style="left:453.10px;top:968.97px;font-size:14.8px;line-height:14.8px;color:#ffffff;font-weight:400;letter-spacing:0.300px;-webkit-text-stroke:0.1px #ffffff;">1</div>
<svg width="14" height="10" viewBox="0 0 14 10" style="position:absolute;left:717px;top:971.5px;"><path d="M2.6 2.2 L7 6.6 L11.4 2.2" fill="none" stroke="#ffffff" stroke-width="1.9" stroke-linecap="round" stroke-linejoin="round"/></svg>
<svg width="16" height="16" style="position:absolute;left:99px;top:969px;"><rect x="0.65" y="0.65" width="14.7" height="14.7" rx="2.2" fill="none" stroke="#9a99a8" stroke-width="1.3"/></svg>
<div class="t" style="left:124.00px;top:969.07px;font-size:14.8px;line-height:14.8px;color:#ffffff;font-weight:400;letter-spacing:0.147px;transform:scaleX(1.0196);transform-origin:0 0;-webkit-text-stroke:0.1px #ffffff;">Partial Image Skip</div>

</body></html>
